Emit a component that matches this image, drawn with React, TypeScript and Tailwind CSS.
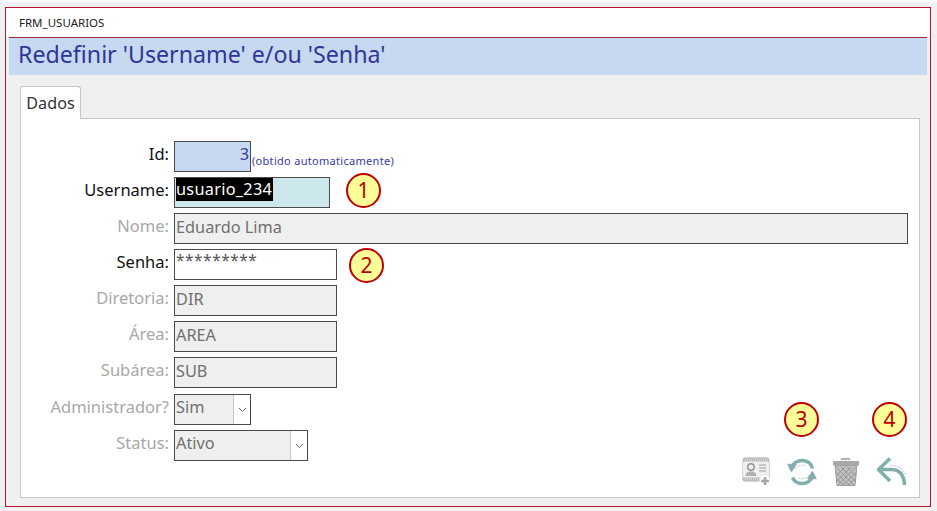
const font = { fontFamily: '"Noto Sans", "Open Sans", sans-serif' };

function Label({ children, dim }: { children: React.ReactNode; dim?: boolean }) {
  return (
    <div className={`w-[153px] shrink-0 whitespace-nowrap pr-[5px] text-right text-[16.5px] leading-[26px] ${dim ? "text-[#a8a8a8]" : "text-[#111]"}`}>
      {children}
    </div>
  );
}

function Field({ w, text, bg = "bg-[#efefef]" }: { w: string; text: string; bg?: string }) {
  return (
    <div className={`${w} ${bg} h-[31px] shrink-0 border border-[#4a4a4a] pl-[1px] text-[16.3px] leading-[27px] text-[#707070]`}>
      {text}
    </div>
  );
}

function Num({ n, className }: { n: number; className?: string }) {
  return (
    <div className={`flex h-[35px] w-[35px] shrink-0 items-center justify-center rounded-full border-2 border-[#c00000] bg-[#ffff99] text-[21px] leading-none text-[#c00000] ${className ?? ""}`}>
      {n}
    </div>
  );
}

function Combo({ w, text }: { w: string; text: string }) {
  return (
    <div className={`${w} flex h-[31px] shrink-0 border border-[#4a4a4a] bg-[#efefef] text-[16.3px] leading-[25px] text-[#707070]`}>
      <div className="flex-1 pl-[1px]">{text}</div>
      <div className="flex w-[17px] items-center justify-center border-l border-[#c8c8c8] bg-white">
        <svg width="9" height="6" viewBox="0 0 9 6" fill="none"><path d="M1 1l3.5 3.5L8 1" stroke="#666" strokeWidth="1" /></svg>
      </div>
    </div>
  );
}

function Row({ label, dim, children }: { label: string; dim?: boolean; children: React.ReactNode }) {
  return (
    <div className="flex h-[31px]">
      <Label dim={dim}>{label}</Label>
      {children}
    </div>
  );
}

function CardIcon() {
  return (
    <svg width="30" height="30" viewBox="0 0 30 30">
      <rect x="1" y="1" width="26" height="23" rx="2" fill="#d4d4d4" stroke="#a8a8a8" />
      <rect x="1" y="5" width="26" height="15" fill="#efefef" />
      <path d="M2 3h24M2 22h24" stroke="#a0a0a0" strokeWidth="1" strokeDasharray="1 1" />
      <circle cx="9" cy="10" r="3.2" fill="#efefef" stroke="#8f8f8f" strokeWidth="1.4" />
      <path d="M3.5 19c.5-4 3-4.5 5.5-4.5s5 .5 5.5 4.5z" fill="#b0b0b0" />
      <path d="M17 8h7M17 11h7M17 14h7" stroke="#a0a0a0" strokeWidth="1.2" />
      <circle cx="23" cy="24" r="5.5" fill="#fff" />
      <path d="M23 20v8M19 24h8" stroke="#a8a8a8" strokeWidth="2.6" />
    </svg>
  );
}

function RefreshIcon() {
  return (
    <svg width="30" height="30" viewBox="0 0 30 30" fill="none">
      <path d="M4 13C5 6 11 3 16 3.5c5 .5 8.5 3.5 9.5 8" stroke="#7fb0ac" strokeWidth="3.4" />
      <path d="M26 17c-1 7-7 10-12 9.5-4-.4-7-2.5-8.5-6" stroke="#7fb0ac" strokeWidth="3.4" />
      <path d="M0.5 7l9 .5-5 7.5z" fill="#7fb0ac" stroke="#a8a0b8" strokeWidth="0.6" />
      <path d="M29.5 22l-9-.5 5-7.5z" fill="#7fb0ac" stroke="#a8a0b8" strokeWidth="0.6" />
      <path d="M8 12c2-3 6-5 11-3M22 18c-2 3-6 5-11 3" stroke="#c4bcd4" strokeWidth="1" strokeDasharray="1.5 1" />
    </svg>
  );
}

function TrashIcon() {
  return (
    <svg width="28" height="30" viewBox="0 0 28 30" fill="none">
      <path d="M9 3c1-2 3-1.5 4-.5 1-1.5 4-1.5 5 .5" stroke="#a0a0a0" strokeWidth="1.5" />
      <rect x="1" y="4" width="26" height="4.5" rx="1" fill="#a8a8a8" />
      <path d="M3 8.5h22l-2 20H5z" fill="#c0c0c0" stroke="#a0a0a0" />
      <path d="M4 10l18 18M9 10l15 15M15 10l9 9M3.5 15l13 13M4 21l7 7M24 10L6 28M19 10L4.5 24.5M13 10L4 19M24.5 15l-13 13M23.5 21l-7 7" stroke="#909090" strokeWidth="0.9" />
    </svg>
  );
}

function BackIcon() {
  return (
    <svg width="30" height="30" viewBox="0 0 30 30" fill="none">
      <path d="M13 1.5L1.5 12.5 13 24" stroke="#7fb0ac" strokeWidth="3.6" strokeLinejoin="round" />
      <path d="M3 12.5h11c8 0 13 4 13.5 15.5" stroke="#7fb0ac" strokeWidth="3.6" />
      <path d="M13 8.5c7 0 13 2.5 15.5 9" stroke="#bdb5d0" strokeWidth="1" strokeDasharray="1.5 1" />
    </svg>
  );
}

export default function App() {
  return (
    <div style={font} className="relative h-[511px] w-[937px] overflow-hidden bg-[#f0f0f0] pt-[7px] pl-[5px]">
      <div className="absolute inset-x-0 top-0 h-[2px] bg-white" />
      <div className="h-[500px] w-[926px] border border-[#b8142e]">
        <div className="flex h-[29px] items-center bg-white pl-[13px] text-[11.5px] text-[#222]">FRM_USUARIOS</div>
        <div className="ml-[3px] mr-[3px] border-t border-[#a82a3a]" />
        <div className="ml-[3px] mr-[3px] h-[37px] bg-[#c6d9f1] pl-[9px] text-[23.2px] leading-[33px] text-[#2f3699]">
          Redefinir 'Username' e/ou 'Senha'
        </div>

        <div className="relative ml-[14px] mt-[11px] w-[900px]">
          <div className="relative z-10 flex h-[33px] w-[61px] items-center justify-center rounded-t-[3px] border border-b-0 border-[#c6c6c6] bg-white text-[16.2px] text-[#333]">
            Dados
          </div>
          <div className="relative -mt-px flex h-[380px] flex-col gap-[5px] border border-[#c6c6c6] bg-white pt-[22px]">
            <Row label="Id:">
              <div className="relative flex h-[31px] w-[77px] shrink-0 justify-end border border-[#4a4a4a] bg-[#c6d9f1] pr-[1px] text-[16.3px] leading-[24px] text-[#3b3ba0]">
                3
              </div>
              <div className="self-end pb-[4px] pl-[1px] text-[11px] leading-[14px] tracking-[0.3px] text-[#3b3ba0]">(obtido automaticamente)</div>
            </Row>
            <Row label="Username:">
              <div className="h-[31px] w-[156px] shrink-0 border border-[#4a4a4a] bg-[#cde8ec] pl-[1px] text-[16.3px] leading-[23px] tracking-[0.28px]">
                <span className="inline-block bg-black pr-[1px] text-white">usuario_234</span>
              </div>
              <Num n={1} className="-mt-[4px] ml-[16px]" />
            </Row>
            <Row label="Nome:" dim>
              <Field w="w-[734px]" text="Eduardo Lima" />
            </Row>
            <Row label="Senha:">
              <div className="h-[31px] w-[163px] shrink-0 border border-[#4a4a4a] bg-white pl-[1px] text-[15.5px] leading-[20px] tracking-[0.5px] text-[#555]">*********</div>
              <Num n={2} className="-mt-[1px] ml-[12px]" />
            </Row>
            <Row label="Diretoria:" dim><Field w="w-[163px]" text="DIR" /></Row>
            <Row label="Área:" dim><Field w="w-[163px]" text="AREA" /></Row>
            <Row label="Subárea:" dim><Field w="w-[163px]" text="SUB" /></Row>
            <div className="mt-px flex flex-col gap-[5px]">
              <Row label="Administrador?" dim><Combo w="w-[77px]" text="Sim" /></Row>
              <Row label="Status:" dim><Combo w="w-[134px]" text="Ativo" /></Row>
            </div>

            <div className="absolute right-[12px] top-[283px] flex w-[166px] flex-col">
              <div className="flex pl-[43px]">
                <Num n={3} />
                <Num n={4} className="ml-[53px]" />
              </div>
              <div className="mt-[20px] flex items-start">
                <div className="ml-[1px]"><CardIcon /></div>
                <div className="ml-[15px]"><RefreshIcon /></div>
                <div className="ml-[15px]"><TrashIcon /></div>
                <div className="ml-[17px]"><BackIcon /></div>
              </div>
            </div>
          </div>
        </div>
      </div>
    </div>
  );
}
